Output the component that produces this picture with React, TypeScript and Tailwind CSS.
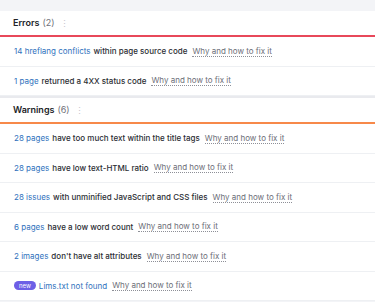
import React from 'react';

interface Issue {
  count: string;
  text: string;
  badge?: boolean;
}

const errors: Issue[] = [
  { count: '14 hreflang conflicts', text: 'within page source code' },
  { count: '1 page', text: 'returned a 4XX status code' },
];

const warnings: Issue[] = [
  { count: '28 pages', text: 'have too much text within the title tags' },
  { count: '28 pages', text: 'have low text-HTML ratio' },
  { count: '28 issues', text: 'with unminified JavaScript and CSS files' },
  { count: '6 pages', text: 'have a low word count' },
  { count: '2 images', text: "don't have alt attributes" },
  { count: 'Lims.txt not found', text: '', badge: true },
];

const IssueRow = ({ issue }: { issue: Issue }) => (
  <div className="flex h-[29.5px] items-center border-b border-[#eef0f3] px-[14px] text-[8px] whitespace-nowrap">
    {issue.badge && (
      <span className="mr-[3px] flex h-[9px] items-center rounded-full bg-[#6d5fe6] px-[5px] text-[6px] leading-none text-white">
        new
      </span>
    )}
    <span className="text-[#2f72bd]">{issue.count}</span>
    {issue.text && <span className="ml-[3px] font-medium text-[#2b2d33]">{issue.text}</span>}
    <span className="ml-[5px] border-b border-dotted border-[#8d8f97] leading-[10px] text-[#6c6e77]">
      Why and how to fix it
    </span>
  </div>
);

const Section = ({
  title,
  count,
  lineColor,
  items,
}: {
  title: string;
  count: number;
  lineColor: string;
  items: Issue[];
}) => (
  <div className="bg-white">
    <div className={`flex h-[26px] items-center border-b-2 px-[13px] ${lineColor}`}>
      <span className="text-[9px] font-semibold text-[#222327]">{title}</span>
      <span className="ml-[3px] text-[9px] text-[#6f7178]">({count})</span>
      <span className="ml-[5px] text-[9px] leading-none text-[#c4c6cc]">⋮</span>
    </div>
    {items.map((issue, i) => (
      <IssueRow key={i} issue={issue} />
    ))}
  </div>
);

export default function App() {
  return (
    <div
      className="h-[302px] w-[375px] overflow-hidden bg-[#f3f4f7] pt-[11px]"
      style={{ fontFamily: 'Inter, "Liberation Sans", sans-serif' }}
    >
      <div className="flex flex-col gap-[2px] bg-[#e9eaee]">
        <Section title="Errors" count={2} lineColor="border-[#e8485a]" items={errors} />
        <Section title="Warnings" count={6} lineColor="border-[#f7894a]" items={warnings} />
      </div>
    </div>
  );
}
